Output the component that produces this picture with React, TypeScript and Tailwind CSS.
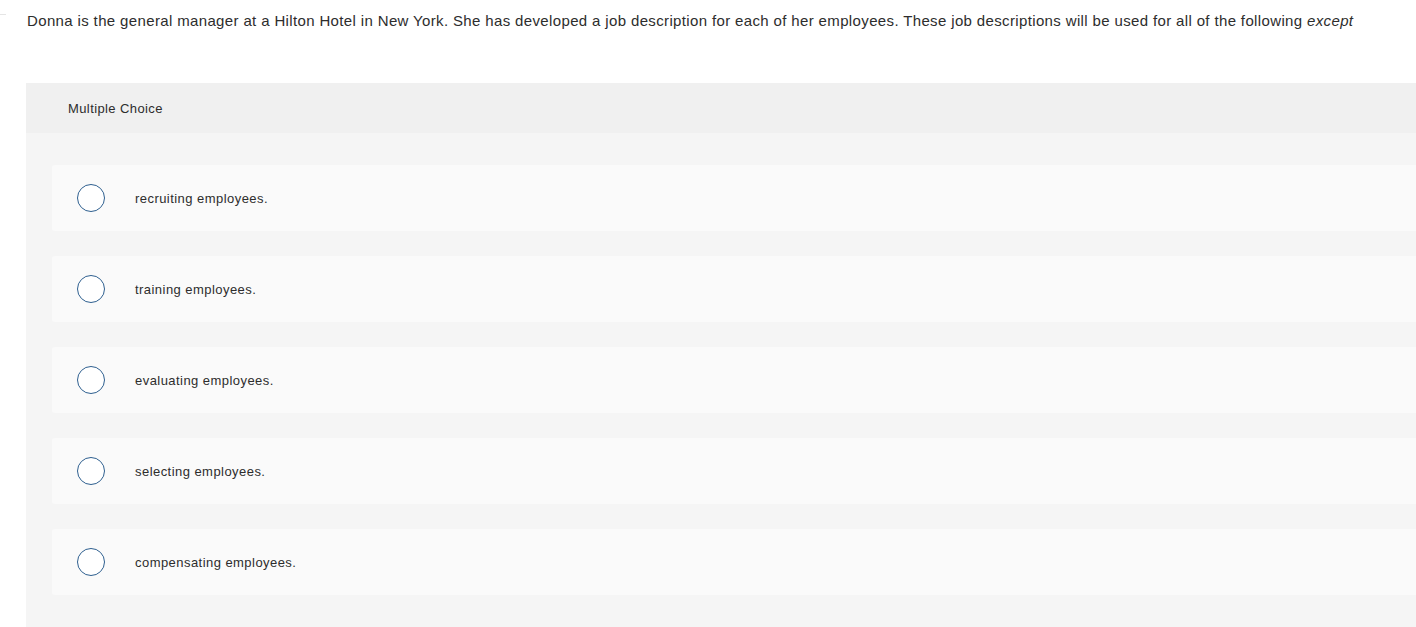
const choices = [
  'recruiting employees.',
  'training employees.',
  'evaluating employees.',
  'selecting employees.',
  'compensating employees.',
];

export default function App() {
  return (
    <div
      className="relative h-[627px] w-[1416px] overflow-hidden bg-white text-[#2d2d2d]"
      style={{ fontFamily: '"Liberation Sans", Arial, sans-serif' }}
    >
      {/* little marker line at the top-left */}
      <div className="absolute left-0 top-[14px] h-px w-[6px] bg-[#e5e5e5]" />

      {/* QUESTION */}
      <p className="pl-[27px] pt-[11px] text-[15px] leading-[20px] tracking-[0.36px]">
        Donna is the general manager at a Hilton Hotel in New York. She has developed a job
        description for each of her employees. These job descriptions will be used for all of the
        following <em>except</em>
      </p>

      {/* PANEL */}
      <div className="ml-[26px] mt-[52px] w-[1420px] bg-[#f5f5f5] pb-[40px]">
        <div className="flex h-[50px] items-center bg-[#f0f0f0] pl-[42px] pt-[2px] text-[13px] tracking-[0.4px]">
          Multiple Choice
        </div>

        <div className="flex flex-col gap-[25px] pl-[26px] pt-[32px]">
          {choices.map((c) => (
            <div
              key={c}
              className="flex h-[66px] items-center rounded-[3px] bg-[#fafafa] pl-[25px]"
            >
              <span className="h-[28px] w-[28px] shrink-0 rounded-full border-[1.5px] border-[#2e5f8f] bg-white" />
              <span className="ml-[30px] pt-[2px] text-[13px] tracking-[0.45px]">{c}</span>
            </div>
          ))}
        </div>
      </div>
    </div>
  );
}
